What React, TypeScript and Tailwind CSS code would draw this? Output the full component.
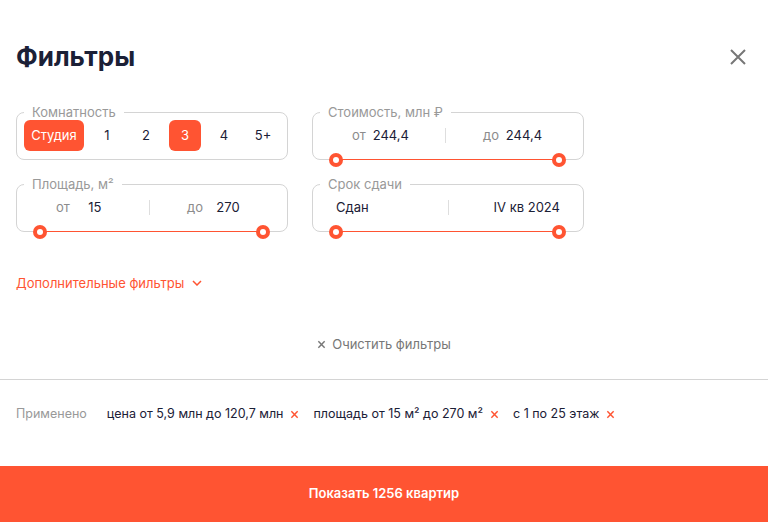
import React from 'react';

const RED = 'bg-[#ff5432]';

const Handle = () => (
  <span className="flex h-[14px] w-[14px] items-center justify-center rounded-full bg-[#ff5432]">
    <span className="h-[6px] w-[6px] rounded-full bg-white" />
  </span>
);

const Slider = () => (
  <div className="absolute bottom-[-7px] left-[17px] right-[18px] flex h-[14px] items-center">
    <div className="absolute left-[7px] right-[7px] top-[6px] h-px bg-[#ff5432]" />
    <div className="relative flex w-full justify-between">
      <Handle />
      <Handle />
    </div>
  </div>
);

const Box = ({ label, children, slider }: { label: string; children: React.ReactNode; slider?: boolean }) => (
  <div className="relative">
    <fieldset className="rounded-lg border border-[#d4d4d4] px-[7px] pb-[8px]">
      <legend className="ml-0 px-2 text-[13px] leading-4 text-[#999]">{label}</legend>
      {children}
    </fieldset>
    {slider && <Slider />}
  </div>
);

const Divider = () => <div className="h-[15px] w-px bg-[#dedede]" />;

const Range = ({ from, to }: { from: string; to: string }) => (
  <div className="flex h-[31px] items-center">
    <div className="flex flex-1 items-center pl-[32px]">
      <span className="text-[#8c8c8c]">от</span>
      <span className="w-[50px] text-center">{from}</span>
    </div>
    <Divider />
    <div className="flex flex-1 items-center pl-[37px]">
      <span className="text-[#8c8c8c]">до</span>
      <span className="w-[50px] text-center">{to}</span>
    </div>
  </div>
);

const Cross = ({ className }: { className?: string }) => (
  <svg viewBox="0 0 10 10" className={className} fill="none" stroke="currentColor" strokeWidth="1.6">
    <path d="M1.5 1.5l7 7M8.5 1.5l-7 7" />
  </svg>
);

export default function App() {
  const rooms = ['Студия', '1', '2', '3', '4', '5+'];
  const active = ['Студия', '3'];
  const applied = ['цена от 5,9 млн до 120,7 млн', 'площадь от 15 м² до 270 м²', 'с 1 по 25 этаж'];

  return (
    <div className="flex h-[522px] w-[768px] flex-col bg-white text-[13px] text-[#1b2036]" style={{ fontFamily: 'Inter, "Noto Sans", sans-serif' }}>
      <div className="flex items-center justify-between px-4 pt-[41px]">
        <h1 className="text-[26px] font-bold leading-8 text-[#1b2036]">Фильтры</h1>
        <svg viewBox="0 0 16 16" className="mr-[6px] h-4 w-4 text-[#777]" fill="none" stroke="currentColor" strokeWidth="2">
          <path d="M1 1l14 14M15 1L1 15" />
        </svg>
      </div>

      <div className="mt-[31px] grid w-[584px] grid-cols-2 gap-x-6 gap-y-4 pl-4">
        <Box label="Комнатность">
          <div className="flex h-[31px] items-center gap-[7px]">
            {rooms.map((r) => (
              <span
                key={r}
                className={`flex h-[31px] items-center justify-center rounded-md ${r === 'Студия' ? 'w-[60px]' : 'w-[32px]'} ${active.includes(r) ? `${RED} text-white` : ''}`}
              >
                {r}
              </span>
            ))}
          </div>
        </Box>
        <Box label="Стоимость, млн ₽" slider>
          <Range from="244,4" to="244,4" />
        </Box>
        <Box label="Площадь, м²" slider>
          <Range from="15" to="270" />
        </Box>
        <Box label="Срок сдачи" slider>
          <div className="flex h-[31px] items-center">
            <div className="flex-1 pl-[16px]">Сдан</div>
            <Divider />
            <div className="flex-1 pr-[16px] text-right">IV кв 2024</div>
          </div>
        </Box>
      </div>

      <div className="mt-[41px] flex items-center gap-2 px-4 leading-5 text-[#ff5432]">
        <span>Дополнительные фильтры</span>
        <svg viewBox="0 0 10 6" className="h-[6px] w-[10px]" fill="none" stroke="currentColor" strokeWidth="1.5">
          <path d="M1 1l4 4 4-4" />
        </svg>
      </div>

      <div className="mt-[41px] flex items-center justify-center gap-[6px] leading-5 text-[#777]">
        <Cross className="h-[9px] w-[9px]" />
        <span>Очистить фильтры</span>
      </div>

      <div className="mt-[25px] h-px bg-[#d4d4d4]" />

      <div className="mt-[24px] flex items-center px-4 text-[12.5px] leading-5">
        <span className="mr-[20px] text-[#999]">Применено</span>
        {applied.map((a) => (
          <span key={a} className="mr-[14px] flex items-center gap-[7px]">
            <span>{a}</span>
            <Cross className="h-[9px] w-[9px] text-[#ff5432]" />
          </span>
        ))}
      </div>

      <div className={`mt-auto flex h-[56px] items-center justify-center ${RED} text-[13px] font-semibold text-white`}>
        Показать 1256 квартир
      </div>
    </div>
  );
}
